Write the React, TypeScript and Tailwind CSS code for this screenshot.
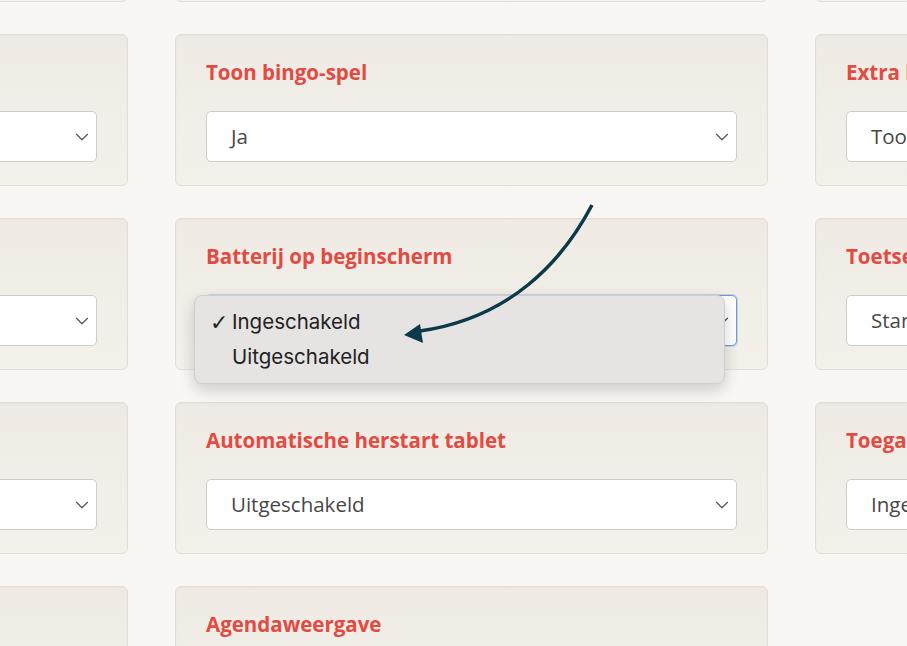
import { ChevronDown } from "lucide-react"

type Card = { label: string; value: string; focus?: boolean }

const rows: Card[][] = [
  [
    { label: "Taal van de app", value: "Nederlands" },
    { label: "Toon weerbericht", value: "Ja" },
    { label: "Extra informatie", value: "Toon alles" },
  ],
  [
    { label: "Toon klok", value: "Ja" },
    { label: "Toon bingo-spel", value: "Ja" },
    { label: "Extra knoppen", value: "Toon niet" },
  ],
  [
    { label: "Lettergrootte", value: "Normaal" },
    { label: "Batterij op beginscherm", value: "Ingeschakeld", focus: true },
    { label: "Toetsenbord", value: "Standaard" },
  ],
  [
    { label: "Geluid bij bericht", value: "Aan" },
    { label: "Automatische herstart tablet", value: "Uitgeschakeld" },
    { label: "Toegang tot instellingen", value: "Ingeschakeld" },
  ],
]

const cardCls =
  "h-[152px] rounded-md border-[1.5px] border-[#e2ded7] bg-gradient-to-b from-[#efebe4] to-[#f4f1eb] px-[30px] pt-[22px] shadow-[inset_0_1px_2px_rgba(0,0,0,0.03)]"

const labelCls = "text-[20.5px] leading-[30px] font-bold text-[#e24a42] whitespace-nowrap"

function SettingCard({ label, value, focus }: Card) {
  return (
    <div className={cardCls}>
      <h3 className={labelCls}>{label}</h3>
      <div
        className={
          "mt-[24px] flex h-[51px] items-center justify-between rounded-[5px] border-[1.5px] bg-white pl-[24px] pr-[3px] " +
          (focus ? "border-[#6c9fd6] shadow-[0_0_0_1px_rgba(108,159,214,0.35)]" : "border-[#cfcdca]")
        }
      >
        <span className="text-[20.5px] text-[#474747] whitespace-nowrap">{value}</span>
        <ChevronDown className="h-[22px] w-[22px] text-[#555]" strokeWidth={1.3} />
      </div>
    </div>
  )
}

export default function App() {
  return (
    <div
      className="relative h-[646px] w-[907px] overflow-hidden bg-[#f9f7f3]"
      style={{ fontFamily: "'Open Sans', sans-serif" }}
    >
      <div className="-ml-[465px] -mt-[150px] grid grid-cols-[593px_593px_593px] gap-x-[47px] gap-y-[32px]">
        {rows.map((row, i) => row.map((c, j) => <SettingCard key={i + "-" + j} {...c} />))}
        <div className={cardCls} />
        <div className={cardCls}>
          <h3 className={labelCls}>Agendaweergave</h3>
        </div>
      </div>

      {/* open native dropdown */}
      <div
        className="absolute left-[194px] top-[295px] w-[531px] rounded-lg border border-[#cfcecb] bg-[#e5e4e2] pt-[9px] pb-[8px] shadow-[0_6px_16px_rgba(0,0,0,0.18)]"
        style={{ fontFamily: "Inter, 'Noto Sans', sans-serif" }}
      >
        <div className="flex h-[35px] items-center text-[#222]">
          <span
            className="w-[37px] pl-[15px] text-[22px] font-bold leading-none"
            style={{ fontFamily: "'DejaVu Sans', sans-serif" }}
          >
            ✓
          </span>
          <span className="text-[20.5px]">Ingeschakeld</span>
        </div>
        <div className="flex h-[35px] items-center text-[#222]">
          <span className="w-[37px]" />
          <span className="text-[20.5px]">Uitgeschakeld</span>
        </div>
      </div>

      {/* annotation arrow */}
      <svg className="pointer-events-none absolute left-0 top-0" width="907" height="646" viewBox="0 0 907 646">
        <path d="M592 205 C 562 262, 510 318, 420 331" fill="none" stroke="#0d3a4a" strokeWidth="3.5" />
        <path d="M404 335 L420 324 L423 343 Z" fill="#0d3a4a" />
      </svg>
    </div>
  )
}
